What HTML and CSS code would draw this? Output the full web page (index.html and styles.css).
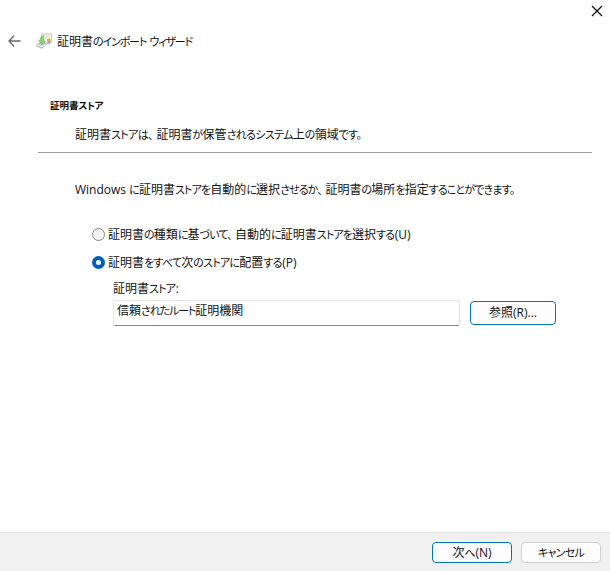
FILE: index.html
```
<!DOCTYPE html>
<html lang="ja">
<head>
<meta charset="utf-8">
<title>証明書のインポート ウィザード</title>
<link rel="stylesheet" href="styles.css">
</head>
<body>
<main class="wizard">
  <header class="titlebar">
    <button class="close" aria-label="閉じる"><svg width="12" height="12" viewBox="0 0 12 12"><path d="M1 1 11 11M11 1 1 11" fill="none" stroke="#111" stroke-width="1.3"/></svg></button>
  </header>
  <div class="caption">
    <button class="back" aria-label="戻る"><svg width="13" height="12" viewBox="0 0 13 12"><path d="M6 .8 1 6l5 5.2M1 6h11.5" fill="none" stroke="#666" stroke-width="1.3"/></svg></button>
    <svg class="cert" width="17" height="16" viewBox="0 0 17 16">
      <path d="M5.5 .8h10v8.5h-11z" fill="#f8f5e4" stroke="#c3c0ae" stroke-width=".8"/>
      <path d="M9 3h4.5M8.5 5h3" stroke="#ddd9c6" stroke-width=".8"/>
      <path d="m11.8 8-.6 3.5 1.5-1 1.5 1V8z" fill="#a4adb0"/>
      <circle cx="12.8" cy="7.2" r="1.8" fill="#d7a744"/>
      <path d="m.8 11.5 5-2.2 5.2 1.8-5.2 4.1-4.4-2z" fill="#c6d0d2" stroke="#8c9da1" stroke-width=".7"/>
      <path d="m1.5 11.8 4.3 1.9 4.8-2.2" fill="none" stroke="#f6fafb"/>
      <path d="M8 2.5C5.2 3 4.3 5 4.5 7H2.7l2.8 4.8L9.3 8H7.5c-.2-1.9 0-3.5.5-5.5z" fill="#7ed572" stroke="#52b451" stroke-width=".5"/>
    </svg>
    <h1 class="line title">証明書<span>のインポート ウィザード</span></h1>
  </div>
  <section class="intro">
    <h2 class="line heading">証明書<span>ストア</span></h2>
    <p class="line desc">証明書<span class="pause">ストアは、</span>証明書<span>が</span>保管<span>されるシステム</span>上<span>の</span>領域<span>です。</span></p>
  </section>
  <section class="content">
    <p class="line help"><b>Windows </b><span>に</span>証明書<span>ストアを</span>自動的<span>に</span>選択<span class="pause">させるか、</span>証明書<span>の</span>場所<span>を</span>指定<span>することができます。</span></p>
    <label class="option first"><i class="radio"></i><span class="line auto">証明書<span>の</span>種類<span>に</span>基<span class="pause">づいて、</span>自動的<span>に</span>証明書<span>ストアを</span>選択<span>する</span><b>(U)</b></span></label>
    <label class="option second"><i class="radio checked"></i><span class="line place">証明書<span>をすべて</span>次<span>のストアに</span>配置<span>する</span><b>(P)</b></span></label>
    <div class="line storelabel">証明書<span>ストア</span><b>:</b></div>
    <div class="picker">
      <div class="field"><div class="line value">信頼<span>されたルート</span>証明機関</div></div>
      <button class="button primary browse"><span class="line">参照<b>(R)...</b></span></button>
    </div>
  </section>
  <footer>
    <button class="button primary next"><span class="line">次<span>へ</span><b>(N)</b></span></button>
    <button class="button cancel"><span class="line"><span>キャンセル</span></span></button>
  </footer>
</main>
</body>
</html>
```
FILE: styles.css
```
* { box-sizing: border-box; }
body { margin: 0; background: #fff; color: #111; font: 12px/18px "Noto Sans CJK JP", sans-serif; }
h1, h2, p { margin: 0; font-size: 12px; font-weight: 400; }
button { padding: 0; border: 0; background: none; color: inherit; font: inherit; }
svg { display: block; }
.wizard { height: 571px; display: flex; flex-direction: column; overflow: hidden; }
.titlebar { height: 30px; flex: none; display: flex; justify-content: flex-end; padding: 5px 7px; }
.close { height: 12px; }
.caption { height: 22px; flex: none; display: flex; align-items: center; padding-left: 8px; }
.cert { margin-left: 15px; }
.title { margin-left: 4px; }
.line { height: 18px; line-height: 18px; white-space: pre; }
.line b { font-family: "Open Sans", "Noto Sans CJK JP", sans-serif; font-weight: 400; line-height: 1; }
.line > span { font-size: 11px; line-height: 1; font-feature-settings: "palt"; letter-spacing: -0.85px; }
.line > .pause { margin-right: 3.5px; }
.line > span + b { margin-left: 0.6px; }
.title > span { letter-spacing: -1.15px; word-spacing: 2px; }
.desc > span { letter-spacing: -0.65px; }
.auto > span { letter-spacing: -0.9px; }
.place > span { letter-spacing: -0.75px; }
.value > span { letter-spacing: -1.1px; }
.cancel .line > span { letter-spacing: -0.7px; }
.intro { height: 101px; flex: none; margin: 0 18px 0 38px; padding: 44px 0 0 12px; border-bottom: 1px solid #a0a0a0; }
.heading { font-size: 9.5px; font-weight: 700; }
.heading > span { font-size: 9.5px; letter-spacing: -0.4px; }
.desc { margin: 11px 0 0 25px; }
.content { flex: 1; padding: 27px 0 0 75px; }
.option { display: flex; align-items: center; height: 18px; margin-left: 17px; }
.first { margin-top: 27px; }
.second { margin-top: 10px; }
.radio { width: 13px; height: 13px; margin-right: 3px; border: 1px solid #858585; border-radius: 50%; background: #f3f3f3; }
.checked { border: 4px solid #005fb8; background: #fff; }
.storelabel { margin: 8px 0 0 38px; }
.picker { display: flex; margin: 3px 0 0 38px; gap: 10px; }
.field { width: 347px; height: 26px; padding: 0 0 0 3px; border: 1px solid #e5e5e5; border-bottom-color: #868686; border-radius: 2px; }
.button { display: flex; align-items: center; justify-content: center; border: 1px solid #d0d0d0; border-radius: 4px; background: #fdfdfd; }
.primary { border-color: #0078b7; }
.browse { width: 86px; height: 24px; margin-top: 1px; padding-bottom: 2px; }
footer { height: 39px; flex: none; display: flex; justify-content: flex-end; gap: 9px; padding: 9px 9px 0 0; border-top: 1px solid #dfdfdf; background: #f0f0f0; }
.next { width: 80px; height: 21px; }
.cancel { width: 80px; height: 21px; }
footer .button { padding-bottom: 1px; }
```
